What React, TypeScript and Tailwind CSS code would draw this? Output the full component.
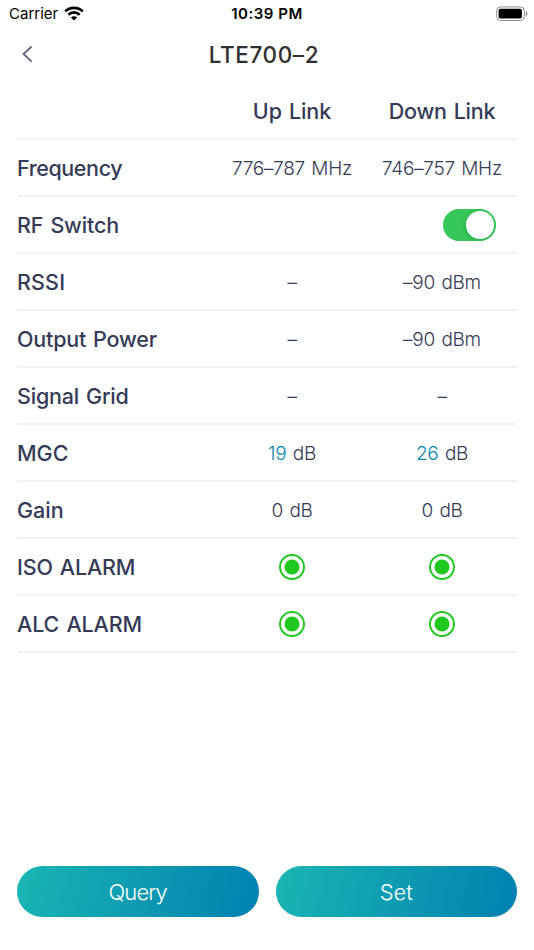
import React, { useState } from "react"
import type { ReactNode } from "react"

type Row = {
  label: string
  labelClass: string
  up?: ReactNode
  down?: ReactNode
}

const BackIcon = () => (
  <svg width="12" height="18" viewBox="0 0 12 18" fill="none">
    <path d="M10.6 1.4 2.6 9l8 7.6" stroke="#676c82" strokeWidth="2" />
  </svg>
)

const WifiIcon = () => (
  <svg width="20" height="15" viewBox="0 0 20 15" fill="none" stroke="#000" strokeWidth="2.7">
    <path d="M1.2 5.4a12.6 12.6 0 0 1 17.6 0" />
    <path d="M4.4 8.7a8 8 0 0 1 11.2 0" />
    <path d="M10 14.6 6.9 11.5a4.4 4.4 0 0 1 6.2 0z" fill="#000" stroke="none" />
  </svg>
)

const BatteryIcon = () => (
  <svg width="32" height="16" viewBox="0 0 32 16">
    <rect x="0.7" y="0.9" width="27.6" height="13.6" rx="4" fill="none" stroke="#8e8e8e" strokeWidth="1" />
    <rect x="2.6" y="2.7" width="23.3" height="9.8" rx="1.8" fill="#000" />
    <path d="M29.8 5.3q1.7.7 1.7 2.4t-1.7 2.4z" fill="#8e8e8e" />
  </svg>
)

const Lamp = () => (
  <svg width="26" height="26" viewBox="0 0 26 26">
    <circle cx="13" cy="13" r="12" fill="none" stroke="#1fc71f" strokeWidth="1.9" />
    <circle cx="13" cy="13" r="7.5" fill="#1fc71f" />
  </svg>
)

const Value = ({ children }: { children: ReactNode }) => (
  <span className="pt-1 text-[19px] font-light tracking-[-0.3px] whitespace-pre [word-spacing:1.5px]">{children}</span>
)

const Setting = ({ value }: { value: number }) => (
  <Value>
    <span className="text-[#0784b0]">{value}</span> dB
  </Value>
)

const Switch = () => {
  const [on, setOn] = useState(true)

  return (
    <button
      role="switch"
      aria-checked={on}
      onClick={() => setOn(!on)}
      className={
        on
          ? "flex h-8 w-[53px] justify-end rounded-full bg-[#35c759] p-0.5"
          : "flex h-8 w-[53px] justify-start rounded-full bg-gray-200 p-0.5"
      }
    >
      <span className="size-7 rounded-full bg-white shadow-[-1px_1px_4px_rgba(0,0,0,0.14)]"></span>
    </button>
  )
}

const rows: Row[] = [
  {
    label: "Frequency",
    labelClass: "tracking-[-0.4px]",
    up: <Value>776–787 MHz</Value>,
    down: <Value>746–757 MHz</Value>,
  },
  { label: "RF Switch", labelClass: "tracking-[-0.15px]", down: <Switch /> },
  { label: "RSSI", labelClass: "tracking-[0.15px]", up: <Value>–</Value>, down: <Value>–90 dBm</Value> },
  { label: "Output Power", labelClass: "tracking-[-0.2px]", up: <Value>–</Value>, down: <Value>–90 dBm</Value> },
  { label: "Signal Grid", labelClass: "tracking-[-0.2px]", up: <Value>–</Value>, down: <Value>–</Value> },
  { label: "MGC", labelClass: "", up: <Setting value={19} />, down: <Setting value={26} /> },
  { label: "Gain", labelClass: "", up: <Value>0 dB</Value>, down: <Value>0 dB</Value> },
  { label: "ISO ALARM", labelClass: "tracking-[-0.15px]", up: <Lamp />, down: <Lamp /> },
  { label: "ALC ALARM", labelClass: "tracking-[-0.1px]", up: <Lamp />, down: <Lamp /> },
]

const rowClass = "grid h-[57px] grid-cols-[200px_150px_150px] items-center border-b-2 border-[#f2f2f3]"

const App = () => {
  return (
    <div className="flex h-[950px] w-[534px] flex-col bg-white font-['Inter',sans-serif] text-[#353b57]">
      <div className="grid h-7 shrink-0 grid-cols-3 items-center pr-1.5 pl-[9px] text-black">
        <div className="flex items-center gap-1.5 text-[15px]">
          Carrier
          <span className="pb-0.5">
            <WifiIcon />
          </span>
        </div>
        <div className="pr-[3px] text-center text-[15px] font-semibold tracking-[0.5px]">10:39 PM</div>
        <div className="flex justify-end">
          <BatteryIcon />
        </div>
      </div>

      <div className="grid h-[52px] shrink-0 grid-cols-[1fr_auto_1fr] items-center pr-[27px] pl-[21px]">
        <button aria-label="Back">
          <BackIcon />
        </button>
        <h1 className="pt-px text-[22.5px] font-[450] tracking-[0.6px] text-[#303030]">LTE700–2</h1>
      </div>

      <div className="mx-[17px] mt-[3px] flex-1">
        <div className={rowClass}>
          <div></div>
          <div className="pt-px text-center text-[21.5px] font-[450] tracking-[-0.1px] [word-spacing:1.5px]">
            Up Link
          </div>
          <div className="pt-px text-center text-[21.5px] font-[450] tracking-[-0.25px] [word-spacing:1.5px]">
            Down Link
          </div>
        </div>
        {rows.map((row) => (
          <div key={row.label} className={rowClass}>
            <div className="pt-px text-[21.5px] font-[450] [word-spacing:1.5px]">
              <span className={row.labelClass}>{row.label}</span>
            </div>
            <div className="flex justify-center">{row.up}</div>
            <div className={row.label === "RF Switch" ? "flex justify-end pr-[21px]" : "flex justify-center"}>
              {row.down}
            </div>
          </div>
        ))}
      </div>

      <div className="mx-[17px] mb-[33px] grid grid-cols-2 gap-[17px] text-[22px] font-light text-white">
        <button className="h-[51px] rounded-full bg-linear-[105deg,#1ab6b3,#0080b0] pt-px tracking-[-0.9px]">
          Query
        </button>
        <button className="h-[51px] rounded-full bg-linear-[105deg,#1ab6b3,#0080b0] pt-px tracking-[-0.1px]">
          Set
        </button>
      </div>
    </div>
  )
}

export default App
